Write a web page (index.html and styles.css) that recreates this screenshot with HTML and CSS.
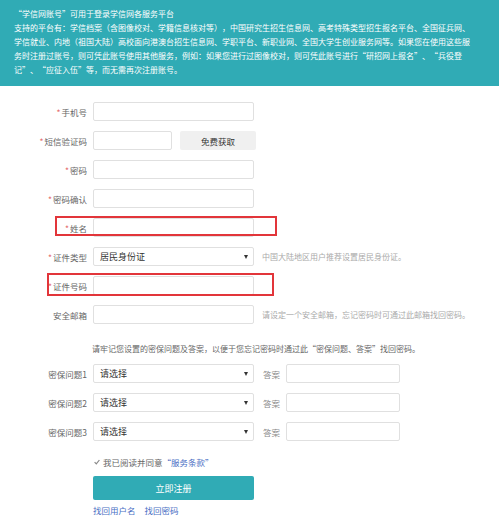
FILE: index.html
```html
<!DOCTYPE html>
<html lang="zh-CN">
<head>
<meta charset="utf-8">
<title>注册</title>
<link rel="stylesheet" href="styles.css">
</head>
<body>
<header class="intro">
  <h1 class="intro-title">“学信网账号”可用于登录学信网各服务平台</h1>
  <p class="intro-text">支持的平台有：学信档案（含图像校对、学籍信息核对等），中国研究生招生信息网、高考特殊类型招生报名平台、全国征兵网、<br>学信就业、内地（祖国大陆）高校面向港澳台招生信息网、学职平台、新职业网、全国大学生创业服务网等。如果您在使用这些服<br>务时注册过账号，则可凭此账号使用其他服务，例如：如果您进行过图像校对，则可凭此账号进行“研招网上报名”、“兵役登<br>记”、“应征入伍”等，而无需再次注册账号。</p>
</header>

<form class="reg">
  <div class="row">
    <label class="lbl"><span class="req">*</span>手机号</label>
    <input class="field" type="text">
  </div>
  <div class="row">
    <label class="lbl"><span class="req">*</span>短信验证码</label>
    <input class="field field-short" type="text">
    <button type="button" class="btn-code">免费获取</button>
  </div>
  <div class="row">
    <label class="lbl"><span class="req">*</span>密码</label>
    <input class="field" type="password">
  </div>
  <div class="row">
    <label class="lbl"><span class="req">*</span>密码确认</label>
    <input class="field" type="password">
  </div>
  <div class="row">
    <label class="lbl"><span class="req">*</span>姓名</label>
    <input class="field" type="text">
    <span class="mark mark-name"></span>
  </div>
  <div class="row">
    <label class="lbl"><span class="req">*</span>证件类型</label>
    <div class="select"><span>居民身份证</span><i class="caret"></i></div>
    <span class="hint">中国大陆地区用户推荐设置居民身份证。</span>
  </div>
  <div class="row">
    <label class="lbl"><span class="req">*</span>证件号码</label>
    <input class="field" type="text">
    <span class="mark mark-id"></span>
  </div>
  <div class="row">
    <label class="lbl">安全邮箱</label>
    <input class="field" type="text">
    <span class="hint">请设定一个安全邮箱，忘记密码时可通过此邮箱找回密码。</span>
  </div>
  <p class="notice">请牢记您设置的密保问题及答案，以便于您忘记密码时通过此“密保问题、答案”找回密码。</p>
  <div class="row">
    <label class="lbl">密保问题1</label>
    <div class="select"><span>请选择</span><i class="caret"></i></div>
    <span class="ans-lbl">答案</span>
    <input class="field field-ans" type="text">
  </div>
  <div class="row">
    <label class="lbl">密保问题2</label>
    <div class="select"><span>请选择</span><i class="caret"></i></div>
    <span class="ans-lbl">答案</span>
    <input class="field field-ans" type="text">
  </div>
  <div class="row">
    <label class="lbl">密保问题3</label>
    <div class="select"><span>请选择</span><i class="caret"></i></div>
    <span class="ans-lbl">答案</span>
    <input class="field field-ans" type="text">
  </div>
  <div class="agree">
    <svg class="check" width="6" height="6" viewBox="0 0 6 6"><path d="M0.6 3.2 L2.3 4.9 L5.4 1" fill="none" stroke="#888" stroke-width="1.2"/></svg>
    <span>我已阅读并同意<a class="link" href="#">“服务条款”</a></span>
  </div>
  <button type="button" class="btn-submit">立即注册</button>
  <div class="links">
    <a class="link" href="#">找回用户名</a>
    <a class="link" href="#">找回密码</a>
  </div>
</form>
</body>
</html>
```

FILE: styles.css
```css
* { box-sizing: border-box; }
html, body {
  margin: 0;
  padding: 0;
  background: #fff;
  font-family: "Noto Sans CJK SC", "Microsoft YaHei", sans-serif;
  color: #555;
}
.intro {
  height: 86px;
  background: #30abb5;
  color: #fff;
  padding: 7px 10px 0 14px;
}
.intro-title {
  margin: 0;
  font-size: 8px;
  line-height: 14px;
  font-weight: normal;
}
.intro-text {
  margin: 0;
  font-size: 8px;
  line-height: 14px;
  white-space: nowrap;
  text-spacing-trim: space-all;
}
.reg {
  padding-top: 16px;
  font-size: 8.5px;
}
.row {
  position: relative;
  display: flex;
  align-items: center;
  height: 19px;
  margin-bottom: 10px;
}
.lbl {
  width: 87px;
  flex: none;
  text-align: right;
  color: #666;
  margin-right: 6px;
}
.req {
  color: #e46b6b;
  margin-right: 1px;
}
.field {
  width: 161px;
  height: 19px;
  border: 1px solid #e0e0e0;
  border-radius: 2px;
  background: #fff;
  padding: 0 6px;
  font: inherit;
  flex: none;
}
.field-short { width: 79px; }
.btn-code {
  margin-left: 8px;
  width: 76px;
  height: 19px;
  border: none;
  border-radius: 2px;
  background: #f0f0f0;
  color: #333;
  font: inherit;
  font-size: 8.5px;
  padding: 0;
}
.select {
  width: 161px;
  height: 19px;
  flex: none;
  display: flex;
  align-items: center;
  justify-content: space-between;
  border: 1px solid #e0e0e0;
  border-radius: 2px;
  padding: 0 5px 0 6px;
  color: #333;
  font-size: 9px;
}
.caret {
  width: 0;
  height: 0;
  border-left: 2px solid transparent;
  border-right: 2px solid transparent;
  border-top: 4px solid #333;
}
.hint {
  margin-left: 8px;
  color: #aaa;
  font-size: 8px;
  white-space: nowrap;
}
.mark {
  position: absolute;
  border: 2px solid #e2353a;
}
.mark-name { left: 55px; top: -2px; width: 222px; height: 20px; }
.mark-id { left: 47px; top: -3px; width: 227px; height: 23px; }
.notice {
  margin: 19px 0 9px 92px;
  line-height: 12px;
  font-size: 8px;
  color: #666;
  white-space: nowrap;
}
.ans-lbl {
  margin-left: 9px;
  width: 23px;
  color: #888;
}
.field-ans { width: 114px; }
.agree {
  margin: 15px 0 0 94px;
  display: flex;
  align-items: center;
  line-height: 12px;
  color: #666;
}
.check { margin-right: 3px; }
.link {
  color: #4a6fc4;
  text-decoration: none;
}
.btn-submit {
  display: block;
  margin: 8px 0 0 93px;
  width: 161px;
  height: 24px;
  border: none;
  border-radius: 2px;
  background: #30abb5;
  color: #fff;
  font: inherit;
  font-size: 9px;
  padding: 0;
}
.links {
  margin: 4px 0 0 93px;
  display: flex;
  gap: 9px;
  line-height: 12px;
}
```
